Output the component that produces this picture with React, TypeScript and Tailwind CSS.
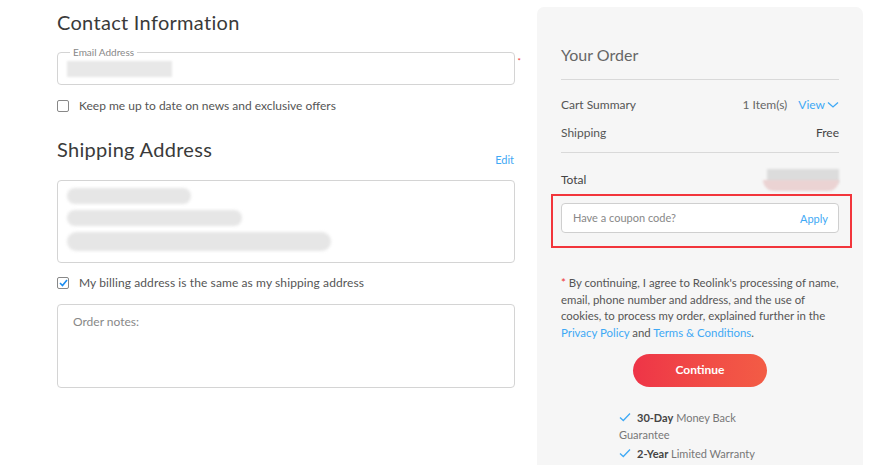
import React from "react";

const font = { fontFamily: "Lato, 'Noto Sans', sans-serif" };

function Check() {
  return (
    <svg width="12" height="10" viewBox="0 0 12 10" className="shrink-0">
      <path d="M1 5.5 L4.3 8.5 L11 1.5" fill="none" stroke="#3fa9f5" strokeWidth="1.3" />
    </svg>
  );
}

function Blur({ w, h = 15, className = "" }: { w: number; h?: number; className?: string }) {
  return (
    <div
      className={`rounded-full bg-[#e6e6e6] blur-[1.5px] ${className}`}
      style={{ width: w, height: h }}
    />
  );
}

export default function App() {
  return (
    <div className="w-[870px] h-[465px] overflow-hidden bg-white flex text-[#555]" style={font}>
      <div className="w-[537px] shrink-0 pl-[57px] pr-[22px] pt-[9px]">
        <h2 className="text-[20px] leading-[26px] text-[#3a3a3a] tracking-[0.3px]">Contact Information</h2>
        <div className="relative mt-[17px] flex items-start">
          <div className="relative h-[33px] flex-1 rounded-[4px] border border-[#d4d4d4] bg-white">
            <span className="absolute left-[12px] -top-[7px] bg-white px-[3px] text-[10px] leading-[12px] text-[#888]">
              Email Address
            </span>
            <div className="pl-[9px] pt-[8px]">
              <div className="h-[16px] w-[105px] bg-[#e8e8e8] blur-[1px]" />
            </div>
          </div>
          <span className="absolute -right-[6px] top-[3px] text-[8px] text-[#e33]">*</span>
        </div>
        <label className="mt-[13px] flex items-center gap-[10px] text-[12px] leading-[16px]">
          <span className="h-[12px] w-[12px] rounded-[2px] border border-[#888] bg-white" />
          <span>Keep me up to date on news and exclusive offers</span>
        </label>
        <div className="mt-[22px] flex items-end justify-between">
          <h2 className="text-[20px] leading-[26px] text-[#3a3a3a] tracking-[0.3px]">Shipping Address</h2>
          <span className="mb-[-6px] mr-[1px] text-[11px] text-[#3fa9f5]">Edit</span>
        </div>
        <div className="mt-[18px] h-[83px] rounded-[4px] border border-[#d4d4d4] bg-white pl-[9px] pt-[7px] flex flex-col gap-[6px]">
          <Blur w={124} h={16} />
          <Blur w={175} h={16} />
          <Blur w={264} h={19} />
        </div>
        <label className="mt-[12px] flex items-center gap-[10px] text-[12px] leading-[16px]">
          <span className="flex h-[12px] w-[12px] items-center justify-center rounded-[2px] border border-[#888] bg-white">
            <svg width="9" height="8" viewBox="0 0 9 8">
              <path d="M1 4 L3.5 6.5 L8 1" fill="none" stroke="#1a8cf0" strokeWidth="1.6" />
            </svg>
          </span>
          <span className="tracking-[0.1px]">My billing address is the same as my shipping address</span>
        </label>
        <div className="mt-[13px] h-[84px] rounded-[4px] border border-[#d4d4d4] bg-white pl-[15px] pt-[8px] text-[12px] text-[#888]">
          Order notes:
        </div>
      </div>

      <div className="mt-[7px] h-[470px] w-[326px] shrink-0 rounded-[7px] bg-[#f6f6f6] px-[24px] pt-[37px]">
        <h3 className="text-[16px] leading-[22px] text-[#666]">Your Order</h3>
        <div className="mt-[13px] h-px bg-[#d9d9d9]" />
        <div className="mt-[17px] flex items-center justify-between text-[12px] leading-[16px]">
          <span>Cart Summary</span>
          <span className="flex items-center">
            <span className="text-[#666]">1 Item(s)</span>
            <span className="ml-[11px] text-[#3fa9f5]">View</span>
            <svg width="12" height="8" viewBox="0 0 12 8" className="ml-[2px]">
              <path d="M1 1.5 L6 6 L11 1.5" fill="none" stroke="#3fa9f5" strokeWidth="1.3" />
            </svg>
          </span>
        </div>
        <div className="mt-[12px] flex items-center justify-between text-[12px] leading-[16px]">
          <span>Shipping</span>
          <span className="text-[#444]">Free</span>
        </div>
        <div className="mt-[11px] h-px bg-[#d9d9d9]" />
        <div className="mt-[16px] flex items-center justify-between text-[12px] leading-[22px]">
          <span className="text-[#444]">Total</span>
          <div className="relative h-[22px] w-[76px]">
            <div className="absolute right-0 top-0 h-[14px] w-[72px] bg-[#dcdcdc] blur-[1px]" />
            <div className="absolute right-0 top-[11px] h-[11px] w-[76px] rounded-b-full bg-[#ebd3d3] blur-[1px]" />
          </div>
        </div>
        <div className="-ml-[10px] -mr-[13px] mt-[3px] border-2 border-[#f2353b] pl-[8px] pr-[11px] pt-[7px] pb-[13px]">
          <div className="flex h-[30px] items-center justify-between rounded-[4px] border border-[#cfcfcf] bg-white pl-[11px] pr-[10px] text-[11px]">
            <span className="text-[#888]">Have a coupon code?</span>
            <span className="mt-[3px] text-[#3fa9f5]">Apply</span>
          </div>
        </div>
        <p className="mt-[27px] whitespace-nowrap text-[11.4px] leading-[16.7px] text-[#555]">
          <span className="text-[#e33]">*</span> By continuing, I agree to Reolink's processing of name,
          <br />
          email, phone number and address, and the use of
          <br />
          cookies, to process my order, explained further in the
          <br />
          <span className="text-[#3fa9f5]">Privacy Policy</span> and{" "}
          <span className="text-[#3fa9f5]">Terms &amp; Conditions</span>.
        </p>
        <div className="mt-[12px] flex justify-center">
          <button className="h-[33px] w-[134px] rounded-full bg-gradient-to-r from-[#ee3447] to-[#f35c45] text-[12px] font-bold text-white">
            Continue
          </button>
        </div>
        <div className="mt-[22px] ml-[58px] w-[150px] text-[11px] leading-[17px] text-[#777]">
          <div className="flex items-center gap-[6px]">
            <Check />
            <span><b className="text-[#444] font-bold">30-Day</b> Money Back</span>
          </div>
          <div>Guarantee</div>
          <div className="mt-[2px] flex items-center gap-[6px]">
            <Check />
            <span><b className="text-[#444] font-bold">2-Year</b> Limited Warranty</span>
          </div>
        </div>
      </div>
    </div>
  );
}
